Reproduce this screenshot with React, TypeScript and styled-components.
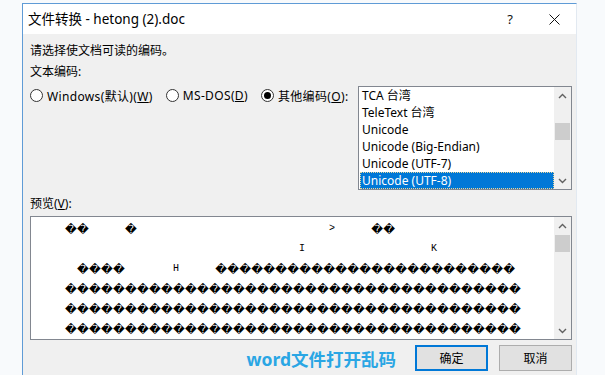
import { createGlobalStyle } from "styled-components";
import styled from "styled-components";

const GlobalStyle = createGlobalStyle`
  html, body {
    margin: 0;
    padding: 0;
    background: #f8fafc;
    overflow: hidden;
  }
  * {
    box-sizing: border-box;
  }
`;

const Page = styled.div`
  width: 605px;
  height: 375px;
  padding-top: 3px;
  padding-left: 22px;
  font-family: "Noto Sans", "Noto Sans CJK SC", sans-serif;
  font-size: 12px;
  color: #000;
`;

const Dialog = styled.div`
  width: 555px;
  height: 372px;
  border-top: 1px solid #5f9bd6;
  border-left: 1px solid #5f9bd6;
  border-right: 1px solid #e2e9f1;
  display: flex;
  flex-direction: column;
  background: #f0f0f0;
`;

const TitleBar = styled.div`
  height: 30px;
  background: #fff;
  display: flex;
  align-items: center;
  padding-left: 5px;
`;

const TitleText = styled.div`
  flex: 1;
  font-size: 13.5px;
  line-height: 30px;
  white-space: nowrap;
`;

const TitleButton = styled.div`
  width: 44px;
  height: 30px;
  display: flex;
  align-items: center;
  justify-content: center;
  font-size: 13px;
  color: #111;
`;

const Body = styled.div`
  flex: 1;
  padding: 8px 4px 0 7px;
  display: flex;
  flex-direction: column;
`;

const Label = styled.div<{ $gap?: number }>`
  line-height: 17px;
  height: 17px;
  margin-top: ${({ $gap }) => $gap ?? 0}px;
  white-space: nowrap;
`;

const EncodingRow = styled.div`
  display: flex;
  align-items: flex-start;
  margin-top: 6px;
`;

const RadioGroup = styled.div`
  display: flex;
  gap: 13px;
  margin-top: 1px;
`;

const RadioItem = styled.label`
  display: flex;
  align-items: center;
  gap: 4px;
  height: 17px;
  white-space: nowrap;
  letter-spacing: 0.35px;
`;

const RadioCircle = styled.span<{ $checked?: boolean }>`
  width: 13px;
  height: 13px;
  border: 1px solid #333;
  border-radius: 50%;
  background: #fff;
  display: flex;
  align-items: center;
  justify-content: center;

  &::after {
    content: "";
    width: 7px;
    height: 7px;
    border-radius: 50%;
    background: ${({ $checked }) => ($checked ? "#000" : "transparent")};
  }
`;

const ListBox = styled.div`
  margin-left: auto;
  width: 214px;
  height: 104px;
  border: 1px solid #828790;
  background: #fff;
  display: flex;
`;

const ListItems = styled.div`
  flex: 1;
  padding-left: 1px;
`;

const ListItem = styled.div<{ $selected?: boolean }>`
  height: 17px;
  line-height: 17px;
  padding-left: 2px;
  white-space: nowrap;
  background: ${({ $selected }) => ($selected ? "#0078d7" : "transparent")};
  color: ${({ $selected }) => ($selected ? "#fff" : "#000")};
  outline: ${({ $selected }) => ($selected ? "1px dotted #e9d79a" : "none")};
  outline-offset: -1px;
`;

const ScrollBar = styled.div`
  width: 17px;
  background: #f0f0f0;
  display: flex;
  flex-direction: column;
`;

const ScrollArrow = styled.div`
  height: 17px;
  display: flex;
  align-items: center;
  justify-content: center;
`;

const ScrollTrack = styled.div`
  flex: 1;
`;

const ScrollThumb = styled.div<{ $top: number }>`
  margin-top: ${({ $top }) => $top}px;
  height: 17px;
  margin-left: 1px;
  margin-right: 1px;
  background: #cdcdcd;
`;

const PreviewBox = styled.div`
  margin-top: 4px;
  height: 124px;
  border: 1px solid #828790;
  background: #fff;
  display: flex;
`;

const PreviewText = styled.div`
  flex: 1;
  padding: 2px 0 0 34px;
  overflow: hidden;
`;

const PreviewLine = styled.div`
  height: 20px;
  line-height: 20px;
  white-space: pre;
  font-family: "Liberation Mono", monospace;
  font-size: 10px;
`;

const Bad = styled.span`
  display: inline-block;
  width: 12px;
  text-align: center;
  font-family: "DejaVu Sans", sans-serif;
  font-size: 11.5px;
  line-height: 20px;
  vertical-align: top;
`;

const Footer = styled.div`
  margin-top: 5px;
  display: flex;
  align-items: center;
  justify-content: flex-end;
  gap: 11px;
`;

const Watermark = styled.div`
  margin-right: 8px;
  font-family: "Noto Sans", "Noto Sans CJK SC", sans-serif;
  font-weight: 700;
  font-size: 17.5px;
  color: #2aa6e4;
  white-space: nowrap;
`;

const Button = styled.div<{ $primary?: boolean }>`
  width: 73px;
  height: 26px;
  display: flex;
  align-items: center;
  justify-content: center;
  background: #e1e1e1;
  border: ${({ $primary }) => ($primary ? "2px solid #0078d7" : "1px solid #adadad")};
`;

const Chevron = ({ up }: { up?: boolean }) => (
  <svg width="9" height="6" viewBox="0 0 9 6">
    <path
      d={up ? "M1 5 L4.5 1.5 L8 5" : "M1 1 L4.5 4.5 L8 1"}
      fill="none"
      stroke="#606060"
      strokeWidth="1.4"
    />
  </svg>
);

const Scroller = ({ thumbTop }: { thumbTop: number }) => (
  <ScrollBar>
    <ScrollArrow>
      <Chevron up />
    </ScrollArrow>
    <ScrollTrack>
      <ScrollThumb $top={thumbTop} />
    </ScrollTrack>
    <ScrollArrow>
      <Chevron />
    </ScrollArrow>
  </ScrollBar>
);

const B = "\uFFFD";
const sp = (n: number) => " ".repeat(n);

const previewLines = [
  B + B + sp(6) + B + sp(32) + ">" + sp(6) + B + B,
  sp(39) + "I" + sp(21) + "K",
  sp(2) + B.repeat(4) + sp(8) + "H" + sp(6) + B.repeat(25),
  B.repeat(38),
  B.repeat(38),
  B.repeat(38),
];

const encodings = [
  "TCA 台湾",
  "TeleText 台湾",
  "Unicode",
  "Unicode (Big-Endian)",
  "Unicode (UTF-7)",
  "Unicode (UTF-8)",
];

const renderLine = (line: string) =>
  (line.match(/\uFFFD|[^\uFFFD]+/g) || []).map((part, i) =>
    part === B ? <Bad key={i}>{B}</Bad> : <span key={i}>{part}</span>
  );

export default function App() {
  return (
    <>
      <GlobalStyle />
      <Page>
        <Dialog>
          <TitleBar>
            <TitleText>文件转换 - hetong (2).doc</TitleText>
            <TitleButton>?</TitleButton>
            <TitleButton>
              <svg width="11" height="11" viewBox="0 0 11 11">
                <path d="M0.5 0.5 L10.5 10.5 M10.5 0.5 L0.5 10.5" stroke="#111" strokeWidth="1" />
              </svg>
            </TitleButton>
          </TitleBar>
          <Body>
            <Label>请选择使文档可读的编码。</Label>
            <Label $gap={4}>文本编码:</Label>
            <EncodingRow>
              <RadioGroup>
                <RadioItem>
                  <RadioCircle />
                  <span>
                    Windows(默认)(<u>W</u>)
                  </span>
                </RadioItem>
                <RadioItem>
                  <RadioCircle />
                  <span>
                    MS-DOS(<u>D</u>)
                  </span>
                </RadioItem>
                <RadioItem>
                  <RadioCircle $checked />
                  <span>
                    其他编码(<u>O</u>):
                  </span>
                </RadioItem>
              </RadioGroup>
              <ListBox>
                <ListItems>
                  {encodings.map((name, i) => (
                    <ListItem key={name} $selected={i === encodings.length - 1}>
                      {name}
                    </ListItem>
                  ))}
                </ListItems>
                <Scroller thumbTop={19} />
              </ListBox>
            </EncodingRow>
            <Label $gap={5}>
              预览(<u>V</u>):
            </Label>
            <PreviewBox>
              <PreviewText>
                {previewLines.map((line, i) => (
                  <PreviewLine key={i}>{renderLine(line)}</PreviewLine>
                ))}
              </PreviewText>
              <Scroller thumbTop={1} />
            </PreviewBox>
            <Footer>
              <Watermark>word文件打开乱码</Watermark>
              <Button $primary>确定</Button>
              <Button>取消</Button>
            </Footer>
          </Body>
        </Dialog>
      </Page>
    </>
  );
}
